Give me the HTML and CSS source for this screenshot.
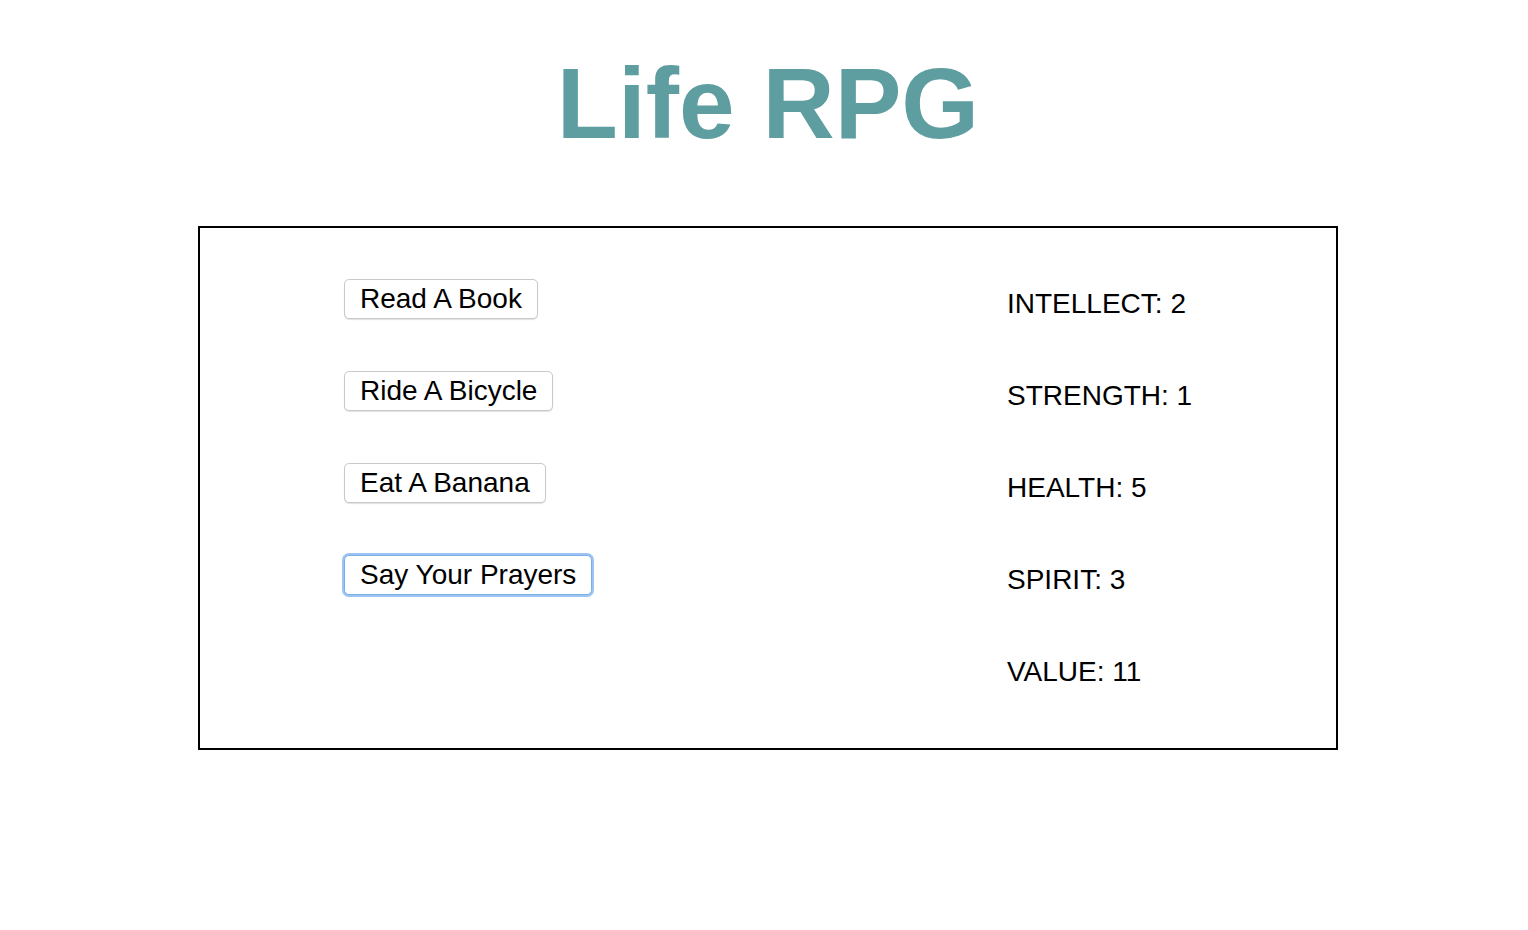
FILE: index.html
```html
<!DOCTYPE html>
<html lang="en">
<head>
<meta charset="utf-8">
<title>Life RPG</title>
<link rel="stylesheet" href="styles.css">
</head>
<body>
  <h1 class="title">Life RPG</h1>
  <main class="board">
    <section class="actions">
      <button class="action">Read A Book</button>
      <button class="action">Ride A Bicycle</button>
      <button class="action">Eat A Banana</button>
      <button class="action is-focused">Say Your Prayers</button>
    </section>
    <section class="stats">
      <div class="stat">INTELLECT: 2</div>
      <div class="stat">STRENGTH: 1</div>
      <div class="stat">HEALTH: 5</div>
      <div class="stat">SPIRIT: 3</div>
      <div class="stat">VALUE: 11</div>
    </section>
  </main>
</body>
</html>
```
FILE: styles.css
```css
html, body {
  background: #ffffff;
}

body {
  margin: 0;
  padding-left: 8px;
  font-family: "Liberation Sans", Arial, Helvetica, sans-serif;
  color: #000;
}

.title {
  margin: 46px 0 0;
  font-size: 100px;
  font-weight: bold;
  line-height: 115px;
  text-align: center;
  color: #5f9ea0;
}

.board {
  margin: 65px 0 0 190px;
  width: 1136px;
  border: 2px solid #000;
  display: grid;
  grid-template-columns: 807px 1fr;
}

.actions {
  padding: 51px 0 0 144px;
  display: flex;
  flex-direction: column;
  align-items: flex-start;
  gap: 52px;
}

.action {
  font-family: "Liberation Sans", Arial, Helvetica, sans-serif;
  font-size: 28px;
  line-height: 32px;
  color: #000;
  background: #fff;
  border: 1px solid #c9c9c9;
  border-radius: 5px;
  padding: 3px 15px;
  box-shadow: 0 1px 1px rgba(0, 0, 0, 0.12);
  margin: 0;
}

.action.is-focused {
  border-color: #7eaee8;
  box-shadow: 0 0 0 2px #9cc4f2;
}

.stats {
  padding: 30px 0 30px 0;
  font-size: 28px;
  line-height: 92px;
}

.stat {
  white-space: nowrap;
}
```
